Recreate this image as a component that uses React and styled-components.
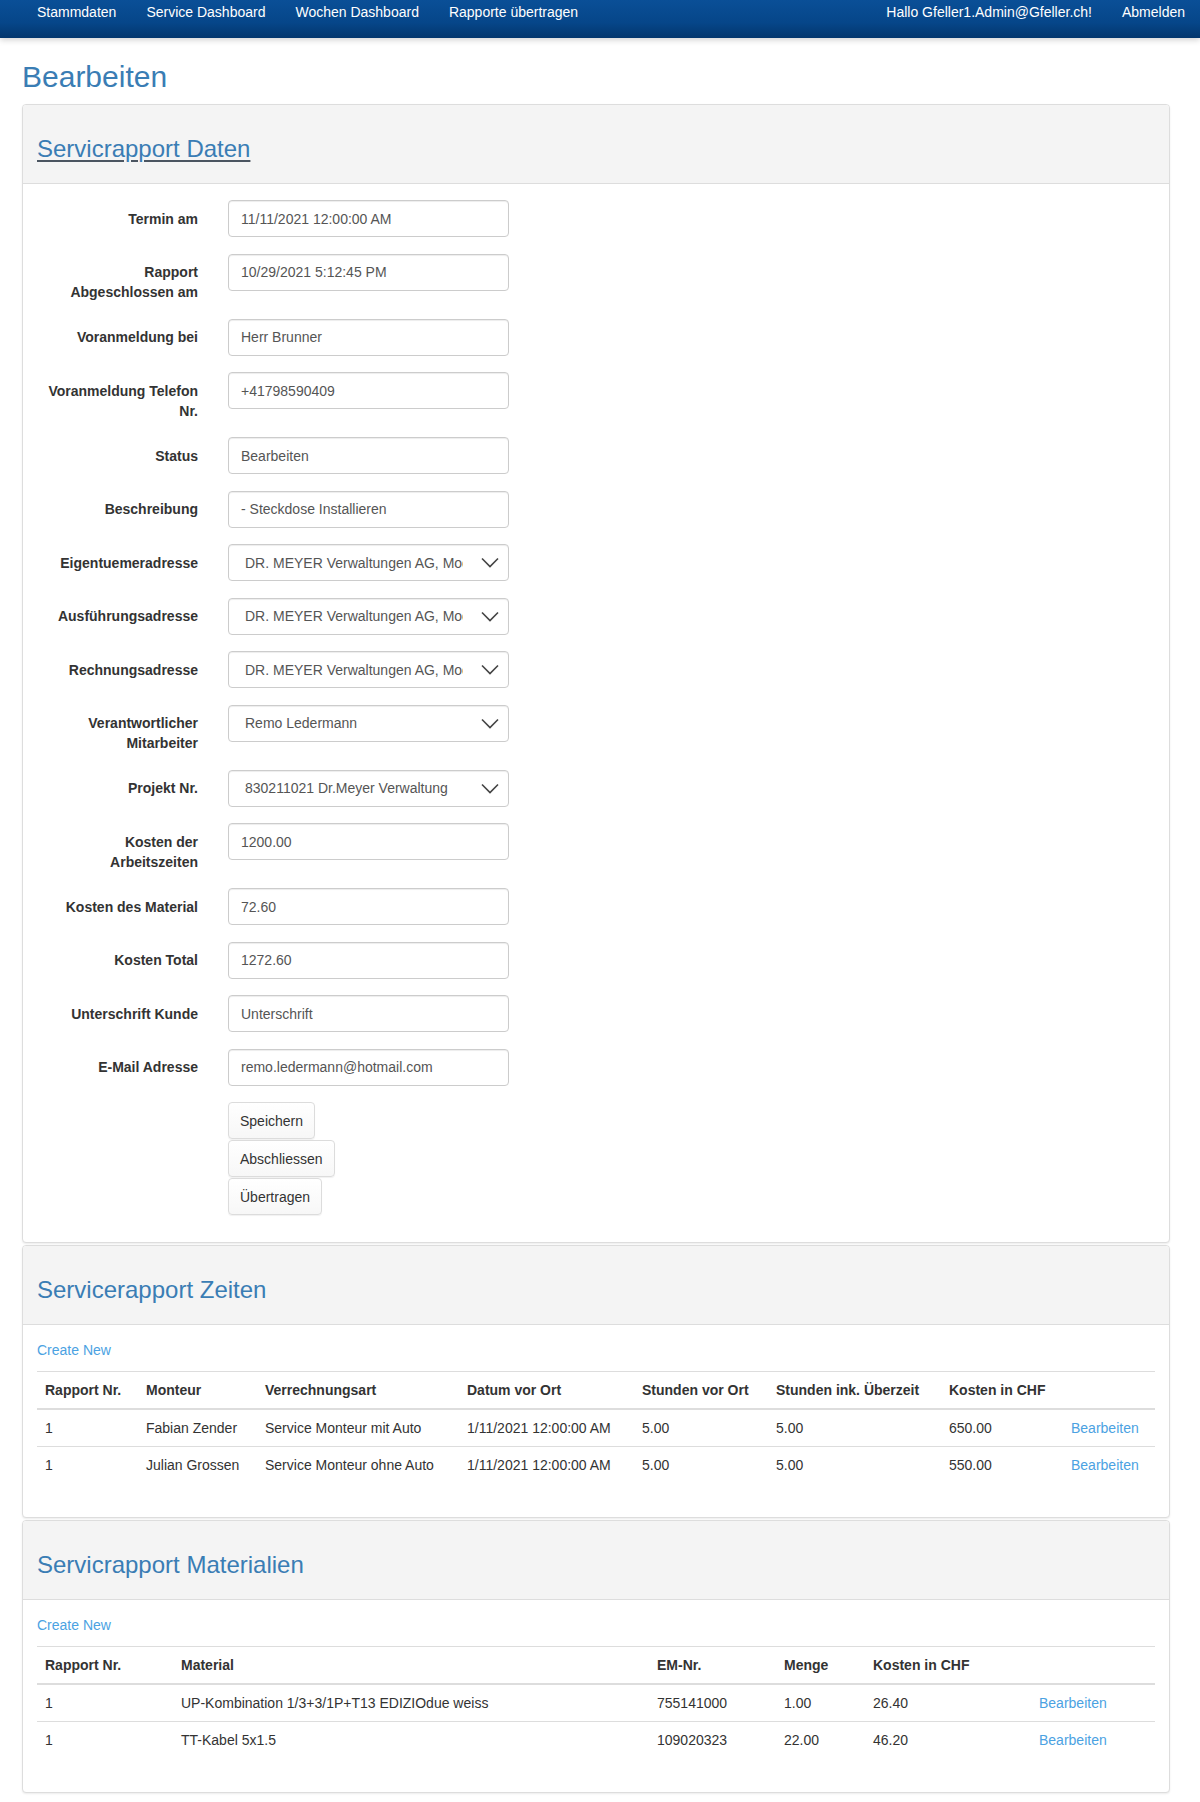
import React from "react";
import styled, { createGlobalStyle } from "styled-components";

const GlobalStyle = createGlobalStyle`
    html, body {
        margin: 0;
        padding: 0;
        background: #fff;
        font-family: "Liberation Sans", Arial, sans-serif;
        font-size: 14px;
        line-height: 20px;
        color: #333;
    }
    * { box-sizing: border-box; }
`;

const colors = {
    title: "#3a7db4",
    link: "#4ba2e2",
    border: "#ddd",
    text: "#333",
    input: "#555",
};

const Navbar = styled.nav`
    height: 38px;
    display: flex;
    justify-content: space-between;
    padding: 2px 0 0 22px;
    background: linear-gradient(to bottom, #0a4f97 0%, #064689 60%, #03366d 100%);
    box-shadow: 0 2px 6px rgba(0, 0, 0, 0.18);
`;

const NavGroup = styled.div`
    display: flex;
`;

const NavLink = styled.a`
    padding: 0 15px;
    color: #fff;
    font-size: 14px;
    line-height: 20px;
    text-decoration: none;
    white-space: nowrap;
`;

const Page = styled.main`
    padding: 0 30px 6px 22px;
`;

const PageTitle = styled.h2`
    margin: 22px 0 11px;
    font-size: 30px;
    font-weight: normal;
    line-height: 33px;
    color: ${colors.title};
`;

const Panel = styled.section`
    border: 1px solid ${colors.border};
    border-radius: 4px;
    background: #fff;
    box-shadow: 0 1px 2px rgba(0, 0, 0, 0.08);
    margin-bottom: 2px;
`;

const PanelHeading = styled.header`
    height: 79px;
    padding: 31px 14px 0;
    background: #f4f4f4;
    border-bottom: 1px solid ${colors.border};
    border-radius: 3px 3px 0 0;
`;

const PanelTitle = styled.h3`
    margin: 0;
    font-size: 24px;
    font-weight: normal;
    line-height: 26px;
    color: ${colors.title};
    text-decoration: ${(p) => (p.$underline ? "underline" : "none")};
    text-decoration-color: #4b5561;
    text-underline-offset: 3px;
`;

const PanelBody = styled.div`
    padding: ${(p) => (p.$form ? "16px" : "15px")} 14px 15px;
`;

const FormGroup = styled.div`
    display: flex;
    margin-bottom: 16.5px;
`;

const Label = styled.label`
    width: 176px;
    padding: 8.5px 15px 0 8px;
    text-align: right;
    font-weight: bold;
    font-size: 14px;
    line-height: 20px;
    color: #333;
    flex-shrink: 0;
`;

const Field = styled.div`
    padding-left: 15px;
`;

const Input = styled.div`
    width: 281px;
    height: 37px;
    padding: 0 12px;
    border: 1px solid #ccc;
    border-radius: 4px;
    box-shadow: inset 0 1px 1px rgba(0, 0, 0, 0.075);
    display: flex;
    align-items: center;
    color: ${colors.input};
    font-size: 14px;
    white-space: nowrap;
    overflow: hidden;
`;

const Select = styled(Input)`
    padding: 0 9px 0 16px;
    justify-content: space-between;
`;

const SelectText = styled.span`
    width: 218px;
    overflow: hidden;
    white-space: nowrap;
`;

const Chevron = () => (
    <svg width="18" height="11" viewBox="0 0 18 11">
        <polyline points="1,1.5 9,9.5 17,1.5" fill="none" stroke="#444" strokeWidth="1.6" />
    </svg>
);

const ButtonStack = styled.div`
    display: flex;
    flex-direction: column;
    align-items: flex-start;
    gap: 1px;
    padding-left: 191px;
    margin-bottom: 12px;
`;

const Button = styled.button`
    height: 37px;
    padding: 0 11px;
    font-family: inherit;
    font-size: 14px;
    color: #333;
    background: linear-gradient(to bottom, #fff 0%, #f7f7f7 100%);
    border: 1px solid #dcdcdc;
    border-radius: 4px;
    box-shadow: 0 1px 1px rgba(0, 0, 0, 0.06);
`;

const Link = styled.a`
    color: ${colors.link};
    text-decoration: none;
`;

const CreateLine = styled.p`
    margin: 0 0 11px;
    line-height: 20px;
`;

const Table = styled.table`
    width: 100%;
    border-collapse: collapse;
    table-layout: fixed;
    margin-bottom: 19px;
    border-top: 1px solid ${colors.border};
`;

const Th = styled.th`
    width: ${(p) => (p.$w ? `${p.$w}px` : "auto")};
    padding: 8px;
    text-align: left;
    font-weight: bold;
    line-height: 20px;
    border-bottom: 2px solid ${colors.border};
    white-space: nowrap;
`;

const Td = styled.td`
    padding: 8px;
    line-height: 20px;
    border-top: 1px solid ${colors.border};
    white-space: nowrap;
    color: #333;
`;

const formFields = [
    { label: "Termin am", value: "11/11/2021 12:00:00 AM" },
    { label: "Rapport Abgeschlossen am", value: "10/29/2021 5:12:45 PM" },
    { label: "Voranmeldung bei", value: "Herr Brunner" },
    { label: "Voranmeldung Telefon Nr.", value: "+41798590409" },
    { label: "Status", value: "Bearbeiten" },
    { label: "Beschreibung", value: "- Steckdose Installieren" },
    { label: "Eigentuemeradresse", value: "DR. MEYER Verwaltungen AG, Moosstrasse", select: true },
    { label: "Ausführungsadresse", value: "DR. MEYER Verwaltungen AG, Moosstrasse", select: true },
    { label: "Rechnungsadresse", value: "DR. MEYER Verwaltungen AG, Moosstrasse", select: true },
    { label: "Verantwortlicher Mitarbeiter", value: "Remo Ledermann", select: true },
    { label: "Projekt Nr.", value: "830211021 Dr.Meyer Verwaltung", select: true },
    { label: "Kosten der Arbeitszeiten", value: "1200.00" },
    { label: "Kosten des Material", value: "72.60" },
    { label: "Kosten Total", value: "1272.60" },
    { label: "Unterschrift Kunde", value: "Unterschrift" },
    { label: "E-Mail Adresse", value: "remo.ledermann@hotmail.com" },
];

const zeitenCols = [
    ["Rapport Nr.", 101],
    ["Monteur", 119],
    ["Verrechnungsart", 202],
    ["Datum vor Ort", 175],
    ["Stunden vor Ort", 134],
    ["Stunden ink. Überzeit", 173],
    ["Kosten in CHF", 122],
    ["", null],
];

const zeitenRows = [
    ["1", "Fabian Zender", "Service Monteur mit Auto", "1/11/2021 12:00:00 AM", "5.00", "5.00", "650.00"],
    ["1", "Julian Grossen", "Service Monteur ohne Auto", "1/11/2021 12:00:00 AM", "5.00", "5.00", "550.00"],
];

const materialCols = [
    ["Rapport Nr.", 136],
    ["Material", 476],
    ["EM-Nr.", 127],
    ["Menge", 89],
    ["Kosten in CHF", 166],
    ["", null],
];

const materialRows = [
    ["1", "UP-Kombination 1/3+3/1P+T13 EDIZIOdue weiss", "755141000", "1.00", "26.40"],
    ["1", "TT-Kabel 5x1.5", "109020323", "22.00", "46.20"],
];

const DataTable = ({ cols, rows }) => (
    <Table>
        <thead>
            <tr>
                {cols.map(([name, w], i) => (
                    <Th key={i} $w={w}>{name}</Th>
                ))}
            </tr>
        </thead>
        <tbody>
            {rows.map((row, r) => (
                <tr key={r}>
                    {row.map((cell, c) => (
                        <Td key={c}>{cell}</Td>
                    ))}
                    <Td>
                        <Link href="#">Bearbeiten</Link>
                    </Td>
                </tr>
            ))}
        </tbody>
    </Table>
);

const App = () => (
    <>
        <GlobalStyle />
        <Navbar>
            <NavGroup>
                <NavLink href="#">Stammdaten</NavLink>
                <NavLink href="#">Service Dashboard</NavLink>
                <NavLink href="#">Wochen Dashboard</NavLink>
                <NavLink href="#">Rapporte übertragen</NavLink>
            </NavGroup>
            <NavGroup>
                <NavLink href="#">Hallo Gfeller1.Admin@Gfeller.ch!</NavLink>
                <NavLink href="#">Abmelden</NavLink>
            </NavGroup>
        </Navbar>

        <Page>
            <PageTitle>Bearbeiten</PageTitle>

            <Panel>
                <PanelHeading>
                    <PanelTitle $underline>Servicrapport Daten</PanelTitle>
                </PanelHeading>
                <PanelBody $form>
                    {formFields.map((f) => (
                        <FormGroup key={f.label}>
                            <Label>{f.label}</Label>
                            <Field>
                                {f.select ? (
                                    <Select>
                                        <SelectText>{f.value}</SelectText>
                                        <Chevron />
                                    </Select>
                                ) : (
                                    <Input>{f.value}</Input>
                                )}
                            </Field>
                        </FormGroup>
                    ))}
                    <ButtonStack>
                        <Button>Speichern</Button>
                        <Button>Abschliessen</Button>
                        <Button>Übertragen</Button>
                    </ButtonStack>
                </PanelBody>
            </Panel>

            <Panel>
                <PanelHeading>
                    <PanelTitle>Servicerapport Zeiten</PanelTitle>
                </PanelHeading>
                <PanelBody>
                    <CreateLine>
                        <Link href="#">Create New</Link>
                    </CreateLine>
                    <DataTable cols={zeitenCols} rows={zeitenRows} />
                </PanelBody>
            </Panel>

            <Panel>
                <PanelHeading>
                    <PanelTitle>Servicrapport Materialien</PanelTitle>
                </PanelHeading>
                <PanelBody>
                    <CreateLine>
                        <Link href="#">Create New</Link>
                    </CreateLine>
                    <DataTable cols={materialCols} rows={materialRows} />
                </PanelBody>
            </Panel>
        </Page>
    </>
);

export default App;
